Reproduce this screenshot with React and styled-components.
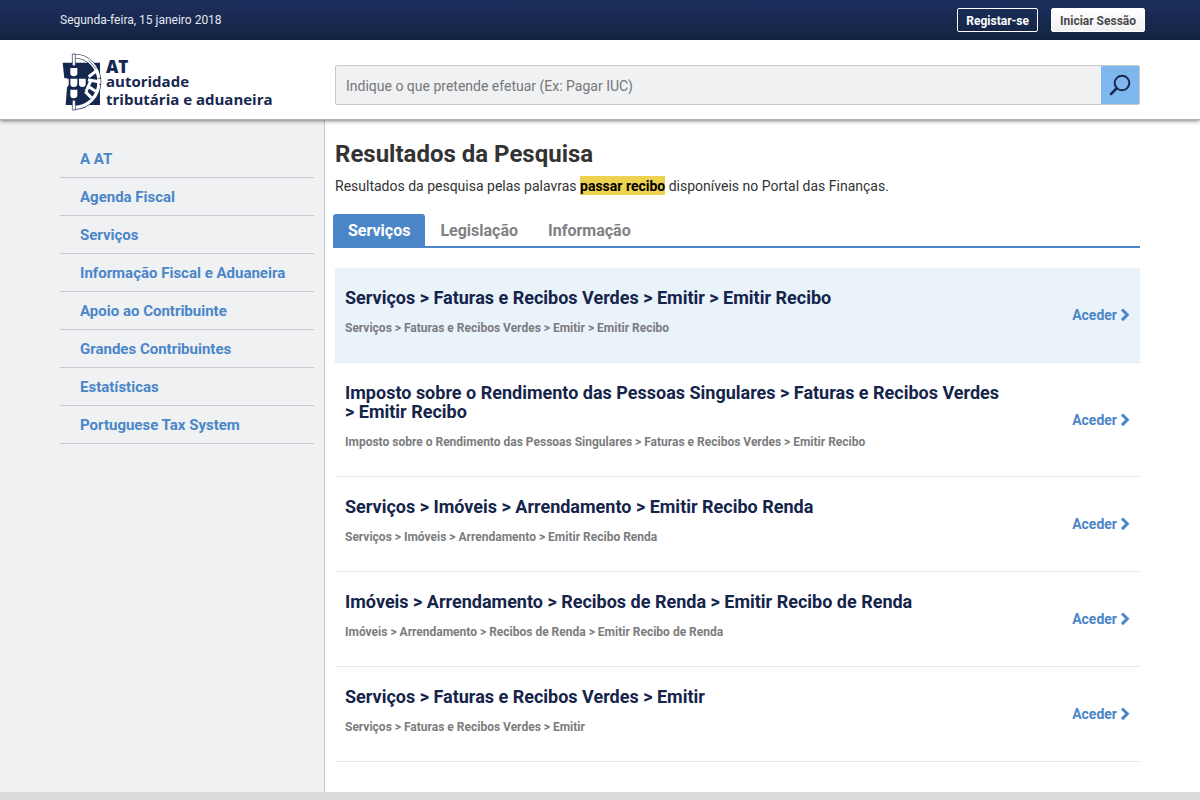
import React from "react";
import styled, { createGlobalStyle } from "styled-components";

const GlobalStyle = createGlobalStyle`
  *, *::before, *::after { box-sizing: border-box; }
  body {
    margin: 0;
    background: #fff;
    color: #333;
    font-family: Roboto, "Liberation Sans", sans-serif;
    font-size: 14px;
    line-height: 20px;
  }
  a { text-decoration: none; }
`;

const Page = styled.div`
  min-height: 100vh;
  display: flex;
  flex-direction: column;
`;

const TopBar = styled.div`
  display: flex;
  align-items: center;
  gap: 13px;
  height: 40px;
  padding: 0 55px 0 60px;
  background: linear-gradient(#1c2f5e, #152443);
`;

const DateText = styled.span`
  flex: 1;
  color: #e4e8f0;
  font-size: 12px;
`;

const AuthButton = styled.button`
  height: 24px;
  padding: 2px 8px 0;
  border: 1px solid #fff;
  border-radius: 2px;
  background: ${(p) => (p.$filled ? "linear-gradient(#fff, #f0f1f3)" : "transparent")};
  color: ${(p) => (p.$filled ? "#4a4a4a" : "#fff")};
  font: 700 12px/20px Roboto, sans-serif;
  cursor: pointer;
`;

const Header = styled.header`
  position: relative;
  display: flex;
  align-items: center;
  height: 80px;
  padding: 0 60px;
  background: #fff;
  border-bottom: 1px solid #b4b4b4;
  box-shadow: 0 1px 4px rgba(0, 0, 0, 0.5);
`;

const LogoLink = styled.a`
  display: flex;
  align-items: center;
  gap: 4px;
  flex: 0 0 275px;
  padding: 5px 0 0 2px;
  color: #16274f;
`;

const LogoText = styled.span`
  display: flex;
  flex-direction: column;
  padding-top: 5px;
  font: 700 15px/18px "Open Sans", "Noto Sans", sans-serif;
`;

const LogoInitials = styled.span`
  font-size: 17px;
  font-weight: 800;
  line-height: 11px;
`;

const SearchForm = styled.form`
  display: flex;
  flex: 1;
  height: 40px;
  margin-top: 10px;
  border: 1px solid #c8cacd;
  border-radius: 2px;
  overflow: hidden;
`;

const SearchInput = styled.input`
  flex: 1;
  min-width: 0;
  padding: 2px 10px 0;
  border: 0;
  background: #f0f1f3;
  color: #333;
  font: 14px/20px Roboto, sans-serif;
  &::placeholder { color: #757779; opacity: 1; }
`;

const SearchButton = styled.button`
  width: 38px;
  padding: 0;
  border: 0;
  background: #7db7ee;
  display: flex;
  align-items: center;
  justify-content: center;
  cursor: pointer;
`;

const Body = styled.div`
  flex: 1;
  display: grid;
  grid-template-columns: 325px minmax(0, 1fr);
`;

const Sidebar = styled.nav`
  padding: 20px 10px 20px 60px;
  background: #f0f1f3;
  border-right: 1px solid #c5c6c8;
`;

const MenuList = styled.ul`
  list-style: none;
  margin: 0;
  padding: 0;
`;

const MenuLink = styled.a`
  display: block;
  padding: 9px 20px 8px;
  border-bottom: 1px solid #c8c9cc;
  color: #4a86c8;
  font-size: 15px;
  font-weight: 700;
`;

const Main = styled.main`
  padding: 20px 60px 30px 10px;
`;

const Heading = styled.h1`
  margin: 0;
  color: #333;
  font-size: 24px;
  line-height: 28px;
  font-weight: 700;
`;

const Intro = styled.p`
  margin: 8px 0 18px;
`;

const Highlight = styled.mark`
  padding: 2px 0 1px;
  background: #eed24f;
  color: #000;
  font-weight: 700;
`;

const Tabs = styled.div`
  display: flex;
  margin: 0 0 20px -2px;
  border-bottom: 2px solid #4a86c8;
`;

const Tab = styled.button`
  height: 32px;
  padding: 2px 15px 0;
  border: 0;
  border-radius: 3px 3px 0 0;
  background: ${(p) => (p["aria-selected"] ? "#4a86c8" : "transparent")};
  color: ${(p) => (p["aria-selected"] ? "#fff" : "#808183")};
  font: 700 16px/20px Roboto, sans-serif;
  cursor: pointer;
`;

const Result = styled.article`
  display: grid;
  grid-template-columns: minmax(0, 660px) 1fr;
  align-items: center;
  padding: 0 10px;
  border-bottom: 1px solid #e8e9eb;
  background: ${(p) => (p.$active ? "#eaf2fa" : "transparent")};
`;

const ResultText = styled.div`
  padding: 20px 0 27px;
`;

const ResultTitle = styled.h2`
  margin: 0 0 14px;
  color: #14244a;
  font-size: 18px;
  line-height: 19px;
  font-weight: 700;
`;

const ResultPath = styled.p`
  margin: 0;
  color: #7b7c7e;
  font-size: 12px;
  line-height: 14px;
  font-weight: 700;
`;

const ResultLink = styled.a`
  justify-self: end;
  display: flex;
  align-items: center;
  gap: 3px;
  color: #4a86c8;
  font-weight: 700;
`;

const Footer = styled.footer`
  height: 8px;
  background: #dadbdd;
`;

const Emblem = () => (
  <svg width="40" height="58" viewBox="36 28 120 174" aria-hidden="true">
    <path d="M38 57H150V184H47L51 130V104H43Z" fill="#16274f" />
    <path d="M73 37A74 77 0 0 1 73 191" fill="none" stroke="#16274f" strokeWidth="14" />
    <path d="M73 37A74 77 0 0 1 73 191" fill="none" stroke="#fff" strokeWidth="10" />
    <g stroke="#fff" strokeWidth="9" fill="none">
      <path d="M116 99L142 80M114 108L150 115M114 128L142 146M122 112L108 144" />
      <path d="M106 144L126 164" />
    </g>
    <path d="M116 50L139 76M143 104H154M147 122H154M112 172L124 164" fill="none" stroke="#16274f" strokeWidth="2" />
    <path d="M67 31H76V66H67ZM67 170H76V199H67Z" fill="#fff" stroke="#16274f" strokeWidth="2" />
    <g fill="#fff">
      <path d="M61 73H82V89Q82 98 71 98Q61 98 61 89Z" />
      <path d="M61 105H82V121Q82 130 71 130Q61 130 61 121Z" />
      <path d="M61 138H82V154Q82 164 71 164Q61 164 61 154Z" />
      <path d="M87 105H107V121Q107 130 97 130Q87 130 87 121Z" />
      <path d="M43 105H56V121Q56 130 49 130Z" />
    </g>
  </svg>
);

const SearchIcon = () => (
  <svg width="22" height="22" viewBox="0 0 22 22" fill="none" stroke="#172950" strokeWidth="2" strokeLinecap="round" aria-hidden="true">
    <circle cx="13" cy="9" r="7.3" />
    <path d="M7.5 14.5L2 20" strokeWidth="2.5" />
  </svg>
);

const Chevron = () => (
  <svg width="10" height="14" viewBox="0 0 10 14" fill="none" stroke="currentColor" strokeWidth="3" aria-hidden="true">
    <path d="M2 1.5L7.3 6.8L2 12.1" />
  </svg>
);

const menu = [
  "A AT",
  "Agenda Fiscal",
  "Serviços",
  "Informação Fiscal e Aduaneira",
  "Apoio ao Contribuinte",
  "Grandes Contribuintes",
  "Estatísticas",
  "Portuguese Tax System",
];

const tabs = ["Serviços", "Legislação", "Informação"];

const results = [
  "Serviços > Faturas e Recibos Verdes > Emitir > Emitir Recibo",
  "Imposto sobre o Rendimento das Pessoas Singulares > Faturas e Recibos Verdes > Emitir Recibo",
  "Serviços > Imóveis > Arrendamento > Emitir Recibo Renda",
  "Imóveis > Arrendamento > Recibos de Renda > Emitir Recibo de Renda",
  "Serviços > Faturas e Recibos Verdes > Emitir",
];

export default function App() {
  return (
    <Page>
      <GlobalStyle />
      <TopBar>
        <DateText>Segunda-feira, 15 janeiro 2018</DateText>
        <AuthButton type="button">Registar-se</AuthButton>
        <AuthButton type="button" $filled>Iniciar Sessão</AuthButton>
      </TopBar>
      <Header>
        <LogoLink href="#">
          <Emblem />
          <LogoText>
            <LogoInitials>AT</LogoInitials>
            <span>autoridade</span>
            <span>tributária e aduaneira</span>
          </LogoText>
        </LogoLink>
        <SearchForm role="search" onSubmit={(e) => e.preventDefault()}>
          <SearchInput
            type="text"
            aria-label="Pesquisar"
            placeholder="Indique o que pretende efetuar (Ex: Pagar IUC)"
          />
          <SearchButton type="submit" aria-label="Pesquisar">
            <SearchIcon />
          </SearchButton>
        </SearchForm>
      </Header>
      <Body>
        <Sidebar>
          <MenuList>
            {menu.map((item) => (
              <li key={item}>
                <MenuLink href="#">{item}</MenuLink>
              </li>
            ))}
          </MenuList>
        </Sidebar>
        <Main>
          <Heading>Resultados da Pesquisa</Heading>
          <Intro>
            Resultados da pesquisa pelas palavras <Highlight>passar recibo</Highlight> disponíveis
            no Portal das Finanças.
          </Intro>
          <Tabs role="tablist">
            {tabs.map((tab, i) => (
              <Tab key={tab} type="button" role="tab" aria-selected={i === 0}>
                {tab}
              </Tab>
            ))}
          </Tabs>
          {results.map((path, i) => (
            <Result key={path} $active={i === 0}>
              <ResultText>
                <ResultTitle>{path}</ResultTitle>
                <ResultPath>{path}</ResultPath>
              </ResultText>
              <ResultLink href="#">
                Aceder
                <Chevron />
              </ResultLink>
            </Result>
          ))}
        </Main>
      </Body>
      <Footer />
    </Page>
  );
}
